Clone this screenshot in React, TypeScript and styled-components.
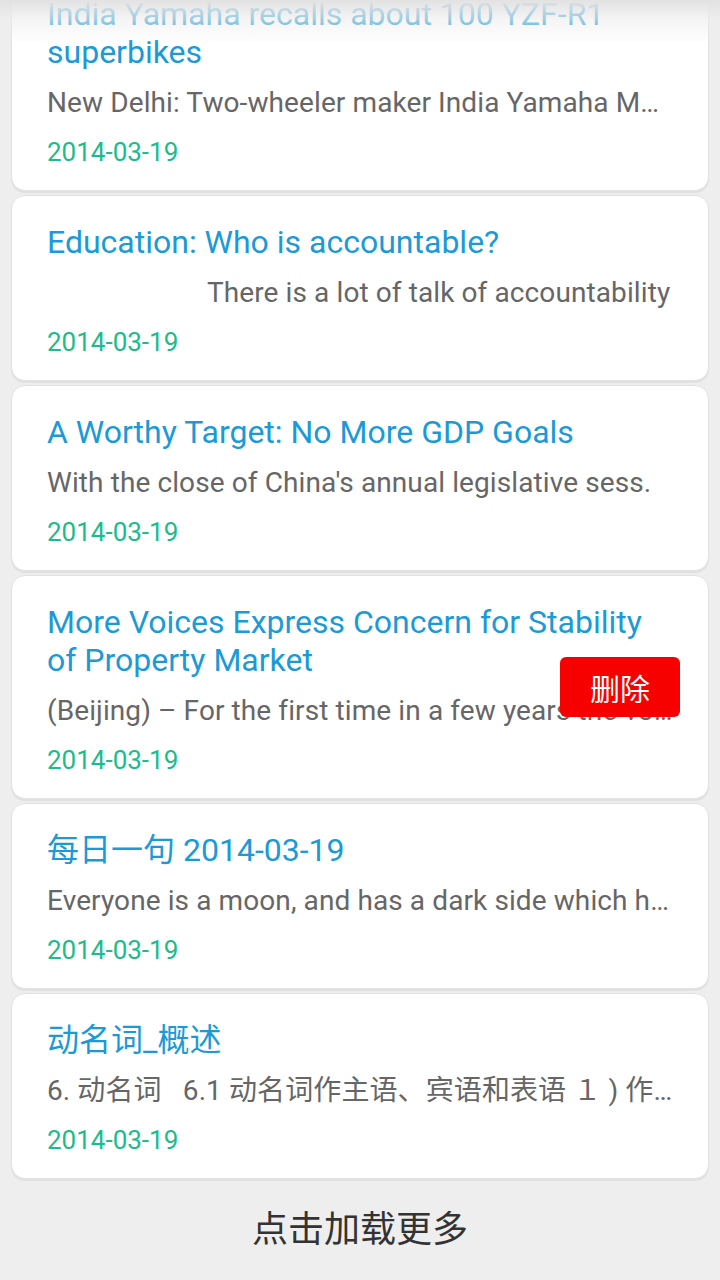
import React from 'react'
import styled, { createGlobalStyle } from 'styled-components'

const GlobalStyle = createGlobalStyle`
  html, body {
    margin: 0;
    padding: 0;
    background: #eeeeee;
    font-family: Roboto, 'Noto Sans CJK SC', sans-serif;
  }
`

const Screen = styled.div`
  position: relative;
  width: 720px;
  height: 1280px;
  overflow: hidden;
  background: #eeeeee;
`

const TopFade = styled.div`
  position: absolute;
  top: 0;
  left: 0;
  right: 0;
  height: 44px;
  background: linear-gradient(180deg, rgba(226, 226, 226, 1) 0%, rgba(238, 238, 238, 0.6) 45%, rgba(255, 255, 255, 0) 100%);
  pointer-events: none;
  z-index: 2;
`

const List = styled.div`
  display: flex;
  flex-direction: column;
  gap: 4px;
  padding: 0 11px;
  margin-top: -33px;
`

const Card = styled.div`
  position: relative;
  background: #ffffff;
  border: 1px solid #e2e2e2;
  border-radius: 14px;
  box-shadow: 0 2px 1px rgba(0, 0, 0, 0.06);
  padding: 27px 35px 21px;
`

const Title = styled.div`
  font-size: 32px;
  line-height: 38px;
  color: #1b9ad6;
`

const Desc = styled.div<{ $indent?: number }>`
  margin-top: 13px;
  font-size: 28px;
  letter-spacing: 0.1px;
  line-height: 38px;
  color: #666666;
  white-space: nowrap;
  overflow: hidden;
  text-overflow: ellipsis;
  text-indent: ${({ $indent }) => $indent || 0}px;
`

const DateText = styled.div`
  margin-top: 13px;
  font-size: 26px;
  line-height: 34px;
  color: #1bbc8b;
`

const DeleteButton = styled.button`
  position: absolute;
  right: 28px;
  top: 81px;
  width: 120px;
  height: 60px;
  border: none;
  border-radius: 6px;
  background: #f70000;
  color: #ffffff;
  font-family: 'Noto Sans CJK SC', sans-serif;
  font-size: 30px;
  padding: 0;
`

const LoadMore = styled.div`
  text-align: center;
  margin-top: 23px;
  font-family: 'Noto Sans CJK SC', sans-serif;
  font-size: 36px;
  line-height: 48px;
  color: #333333;
`

type Item = {
  title: string
  desc: string
  date: string
  indent?: number
  deletable?: boolean
}

const items: Item[] = [
  {
    title: 'India Yamaha recalls about 100 YZF-R1 superbikes',
    desc: 'New Delhi: Two-wheeler maker India Yamaha Motor has recalled about 100 units',
    date: '2014-03-19',
  },
  {
    title: 'Education: Who is accountable?',
    desc: 'There is a lot of talk of accountability',
    date: '2014-03-19',
    indent: 160,
  },
  {
    title: 'A Worthy Target: No More GDP Goals',
    desc: "With the close of China's annual legislative sess.",
    date: '2014-03-19',
  },
  {
    title: 'More Voices Express Concern for Stability of Property Market',
    desc: '(Beijing) – For the first time in a few years the voices of concern',
    date: '2014-03-19',
    deletable: true,
  },
  {
    title: '每日一句 2014-03-19',
    desc: 'Everyone is a moon, and has a dark side which he never shows to anybody.',
    date: '2014-03-19',
  },
  {
    title: '动名词_概述',
    desc: '6. 动名词\u00a0\u00a0\u00a06.1 动名词作主语、宾语和表语 １ ) 作主语',
    date: '2014-03-19',
  },
]

const App = () => {
  return (
    <Screen>
      <GlobalStyle />
      <TopFade />
      <List>
        {items.map((item, i) => (
          <Card key={i}>
            <Title>{item.title}</Title>
            <Desc $indent={item.indent}>{item.desc}</Desc>
            <DateText>{item.date}</DateText>
            {item.deletable && <DeleteButton>删除</DeleteButton>}
          </Card>
        ))}
      </List>
      <LoadMore>点击加载更多</LoadMore>
    </Screen>
  )
}

export default App
